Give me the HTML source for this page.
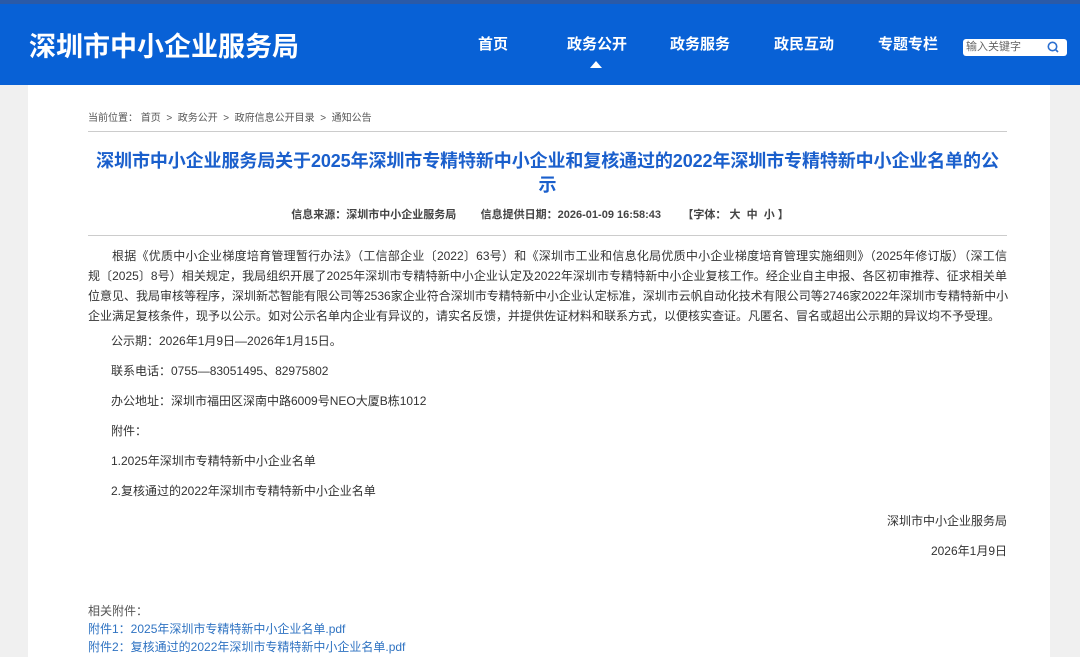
<!DOCTYPE html>
<html><head><meta charset="utf-8"><style>
*{margin:0;padding:0;box-sizing:border-box}
body{width:1080px;height:657px;overflow:hidden;background:#f0f0f0;font-family:"Liberation Sans","Noto Sans CJK SC",sans-serif;color:#333;position:relative}
.hd{position:absolute;left:0;top:0;width:1080px;height:85px;background:#0861d6;border-top:4px solid #2a5aa8}
.logo{position:absolute;left:29px;top:21px;font-size:27px;color:#fff;font-weight:bold}
.nav{position:absolute;top:29px;font-size:15px;color:#fff;font-weight:bold}
.tri{position:absolute;left:590px;top:57px;width:0;height:0;border-left:6px solid transparent;border-right:6px solid transparent;border-bottom:7px solid #fff}
.search{position:absolute;left:963px;top:35px;width:104px;height:17px;background:#fff;border-radius:3px;font-size:11px;color:#666;padding-left:3px;line-height:17px}
.box{position:absolute;left:28px;top:85px;width:1022px;height:572px;background:#fff}
.crumb{position:absolute;left:88px;top:109px;font-size:10px;color:#555}
.hr{position:absolute;left:88px;width:919px;height:1px;background:#ccc}
.title{position:absolute;left:80px;width:935px;top:149px;text-align:center;font-size:18px;font-weight:bold;color:#1a5fcc;line-height:24px;letter-spacing:-0.1px}
.meta{position:absolute;left:0;width:1080px;top:206px;text-align:center;font-size:11px;font-weight:bold;color:#444}
.p{position:absolute;left:88px;width:919px;font-size:12px;line-height:20px;color:#333}
.p div{white-space:nowrap;text-align:justify;text-align-last:justify}
.p div.last{text-align-last:left}
.l{position:absolute;font-size:12px;color:#333}
.a{position:absolute;left:88px;font-size:12px;color:#2f73c2}
</style></head><body>
<div class="hd">
<div class="logo">深圳市中小企业服务局</div>
<div class="nav" style="left:478px">首页</div>
<div class="nav" style="left:567px">政务公开</div>
<div class="nav" style="left:670px">政务服务</div>
<div class="nav" style="left:774px">政民互动</div>
<div class="nav" style="left:878px">专题专栏</div>
<div class="tri"></div>
<div class="search">输入关键字
<svg style="position:absolute;right:8px;top:2px" width="12" height="12" viewBox="0 0 12 12"><circle cx="5.5" cy="5.5" r="4.2" fill="none" stroke="#2b6fd0" stroke-width="1.6"/><path d="M8.5 8.5L11 11" stroke="#2b6fd0" stroke-width="1.6"/></svg></div>
</div>
<div class="box"></div>
<div class="crumb">当前位置： 首页 &nbsp;&gt;&nbsp; 政务公开 &nbsp;&gt;&nbsp; 政府信息公开目录 &nbsp;&gt;&nbsp; 通知公告</div>
<div class="hr" style="top:131px"></div>
<div class="title">深圳市中小企业服务局关于2025年深圳市专精特新中小企业和复核通过的2022年深圳市专精特新中小企业名单的公<br>示</div>
<div class="meta">信息来源：深圳市中小企业服务局 &nbsp;&nbsp;&nbsp;&nbsp;&nbsp;&nbsp; 信息提供日期：2026-01-09 16:58:43 &nbsp;&nbsp;&nbsp;&nbsp;&nbsp;&nbsp;【字体：&nbsp;大 &nbsp;中 &nbsp;小 】</div>
<div class="hr" style="top:235px"></div>
<div class="p" style="top:246px">
<div style="padding-left:24px">根据《优质中小企业梯度培育管理暂行办法》（工信部企业〔2022〕63号）和《深圳市工业和信息化局优质中小企业梯度培育管理实施细则》（2025年修订版）（深工信</div>
<div>规〔2025〕8号）相关规定，我局组织开展了2025年深圳市专精特新中小企业认定及2022年深圳市专精特新中小企业复核工作。经企业自主申报、各区初审推荐、征求相关单</div>
<div>位意见、我局审核等程序，深圳新芯智能有限公司等2536家企业符合深圳市专精特新中小企业认定标准，深圳市云帆自动化技术有限公司等2746家2022年深圳市专精特新中小</div>
<div class="last">企业满足复核条件，现予以公示。如对公示名单内企业有异议的，请实名反馈，并提供佐证材料和联系方式，以便核实查证。凡匿名、冒名或超出公示期的异议均不予受理。</div>
</div>
<div class="l" style="left:111px;top:332px">公示期：2026年1月9日—2026年1月15日。</div>
<div class="l" style="left:111px;top:362px">联系电话：0755—83051495、82975802</div>
<div class="l" style="left:111px;top:392px">办公地址：深圳市福田区深南中路6009号NEO大厦B栋1012</div>
<div class="l" style="left:111px;top:422px">附件：</div>
<div class="l" style="left:111px;top:452px">1.2025年深圳市专精特新中小企业名单</div>
<div class="l" style="left:111px;top:482px">2.复核通过的2022年深圳市专精特新中小企业名单</div>
<div class="l" style="right:73px;top:512px">深圳市中小企业服务局</div>
<div class="l" style="right:73px;top:542px">2026年1月9日</div>
<div class="l" style="left:88px;top:602px;color:#555">相关附件：</div>
<div class="a" style="top:620px">附件1：2025年深圳市专精特新中小企业名单.pdf</div>
<div class="a" style="top:638px">附件2：复核通过的2022年深圳市专精特新中小企业名单.pdf</div>
</body></html>
